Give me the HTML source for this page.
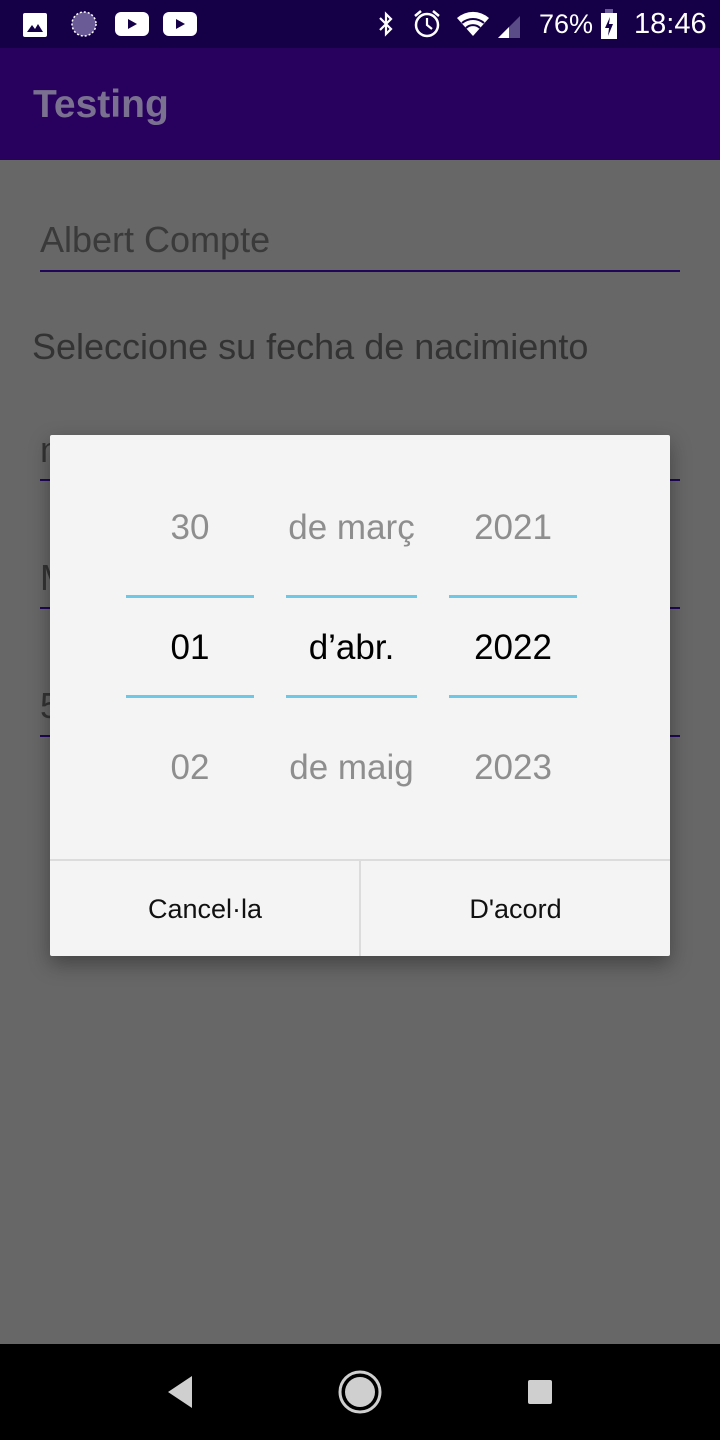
<!DOCTYPE html>
<html><head><meta charset="utf-8"><style>
*{margin:0;padding:0;box-sizing:border-box}
body{width:720px;height:1440px;position:relative;background:#676767;font-family:"Liberation Sans",Roboto,sans-serif;overflow:hidden}
.abs{position:absolute}
.t{position:absolute;white-space:nowrap}
.ul{position:absolute;left:40px;width:640px;height:2px;background:#1f0658}
.col{position:absolute;text-align:center;font-size:35px}
.blue{position:absolute;height:3px;background:#6dc8e8}
</style></head><body>
<div class="abs" style="left:0;top:0;width:720px;height:48px;background:#150048"></div>
<svg class="abs" style="left:22px;top:12px" width="28" height="26"><rect x="1" y="1" width="24" height="24" rx="2" fill="#fff"/><path d="M5 20 L10 13 L13 17 L16 12 L21 20Z" fill="#150048"/></svg>
<svg class="abs" style="left:70px;top:10px" width="30" height="30"><circle cx="14" cy="14" r="12" fill="#6a5a95"/><circle cx="14" cy="14" r="12" fill="none" stroke="#fff" stroke-width="1.5" stroke-dasharray="2 2"/></svg>
<svg class="abs" style="left:115px;top:12px" width="36" height="26"><rect x="0" y="0" width="34" height="24" rx="6" fill="#fff"/><path d="M13 7 L22 12 L13 17Z" fill="#150048"/></svg>
<svg class="abs" style="left:163px;top:12px" width="36" height="26"><rect x="0" y="0" width="34" height="24" rx="6" fill="#fff"/><path d="M13 7 L22 12 L13 17Z" fill="#150048"/></svg>
<svg class="abs" style="left:376px;top:10px" width="20" height="28"><path d="M4 8 L15 19 L10 24 L10 4 L15 9 L4 20" fill="none" stroke="#fff" stroke-width="2.2"/></svg>
<svg class="abs" style="left:412px;top:8px" width="30" height="32"><circle cx="15" cy="17" r="11" fill="none" stroke="#fff" stroke-width="2.5"/><path d="M15 10 V17 L20 21" fill="none" stroke="#fff" stroke-width="2.2"/><path d="M3 8 L9 3 M27 8 L21 3" stroke="#fff" stroke-width="2.5"/></svg>
<svg class="abs" style="left:455px;top:10px" width="36" height="28"><path d="M2 8 A24 24 0 0 1 34 8 L18 26Z" fill="#fff"/><path d="M7 13 A17 17 0 0 1 29 13" fill="none" stroke="#150048" stroke-width="2"/><path d="M11 18 A10 10 0 0 1 25 18" fill="none" stroke="#150048" stroke-width="2"/></svg>
<svg class="abs" style="left:496px;top:12px" width="26" height="26"><path d="M2 26 L24 4 L24 26Z" fill="#5a4c86"/><path d="M2 26 L13 15 L13 26Z" fill="#fff"/></svg>
<div class="t" style="left:539px;top:9px;font-size:27px;color:#fff">76%</div>
<svg class="abs" style="left:600px;top:8px" width="20" height="32"><rect x="5" y="1" width="8" height="4" fill="#6a5a95"/><rect x="1" y="5" width="16" height="26" fill="#fff"/><path d="M10 9 L5 20 L9 20 L8 28 L13 16 L9 16Z" fill="#150048"/></svg>
<div class="t" style="left:634px;top:8px;font-size:29px;color:#fff">18:46</div>
<div class="abs" style="left:0;top:48px;width:720px;height:112px;background:#28005e"></div>
<div class="t" style="left:33px;top:83px;font-size:39px;font-weight:bold;color:#7a7190">Testing</div>
<div class="t" style="left:40px;top:219px;font-size:36px;color:#3a3a3a">Albert Compte</div>
<div class="ul" style="top:270px"></div>
<div class="t" style="left:32px;top:326px;font-size:36px;color:#333">Seleccione su fecha de nacimiento</div>
<div class="t" style="left:40px;top:429px;font-size:36px;color:#333">n</div>
<div class="ul" style="top:479px"></div>
<div class="t" style="left:40px;top:557px;font-size:36px;color:#333">M</div>
<div class="ul" style="top:607px"></div>
<div class="t" style="left:40px;top:685px;font-size:36px;color:#333">5</div>
<div class="ul" style="top:735px"></div>
<div class="abs" style="left:50px;top:435px;width:620px;height:521px;background:#f4f4f4;border-radius:2px;box-shadow:0 8px 20px rgba(0,0,0,.35)">
 <div class="col" style="left:66px;width:148px;top:73px;color:#8e8e8e">30</div>
 <div class="col" style="left:216px;width:171px;top:73px;color:#8e8e8e">de març</div>
 <div class="col" style="left:389px;width:148px;top:73px;color:#8e8e8e">2021</div>
 <div class="blue" style="left:76px;width:128px;top:160px"></div>
 <div class="blue" style="left:236px;width:131px;top:160px"></div>
 <div class="blue" style="left:399px;width:128px;top:160px"></div>
 <div class="col" style="left:66px;width:148px;top:193px;color:#000">01</div>
 <div class="col" style="left:216px;width:171px;top:193px;color:#000">d’abr.</div>
 <div class="col" style="left:389px;width:148px;top:193px;color:#000">2022</div>
 <div class="blue" style="left:76px;width:128px;top:260px"></div>
 <div class="blue" style="left:236px;width:131px;top:260px"></div>
 <div class="blue" style="left:399px;width:128px;top:260px"></div>
 <div class="col" style="left:66px;width:148px;top:313px;color:#8e8e8e">02</div>
 <div class="col" style="left:216px;width:171px;top:313px;color:#8e8e8e">de maig</div>
 <div class="col" style="left:389px;width:148px;top:313px;color:#8e8e8e">2023</div>
 <div class="abs" style="left:0;top:424px;width:620px;height:2px;background:#dcdcdc"></div>
 <div class="abs" style="left:309px;top:426px;width:2px;height:95px;background:#dcdcdc"></div>
 <div class="t" style="left:0;width:310px;text-align:center;top:459px;font-size:27px;color:#111">Cancel·la</div>
 <div class="t" style="left:311px;width:309px;text-align:center;top:459px;font-size:27px;color:#111">D'acord</div>
</div>
<div class="abs" style="left:0;top:1344px;width:720px;height:96px;background:#000"></div>
<svg class="abs" style="left:164px;top:1374px" width="32" height="36"><path d="M28 2 L4 18 L28 34Z" fill="#cfcfcf"/></svg>
<svg class="abs" style="left:336px;top:1368px" width="48" height="48"><circle cx="24" cy="24" r="20" fill="none" stroke="#cfcfcf" stroke-width="3"/><circle cx="24" cy="24" r="15" fill="#cfcfcf"/></svg>
<div class="abs" style="left:528px;top:1380px;width:24px;height:24px;background:#cfcfcf;border-radius:2px"></div>
</body></html>
